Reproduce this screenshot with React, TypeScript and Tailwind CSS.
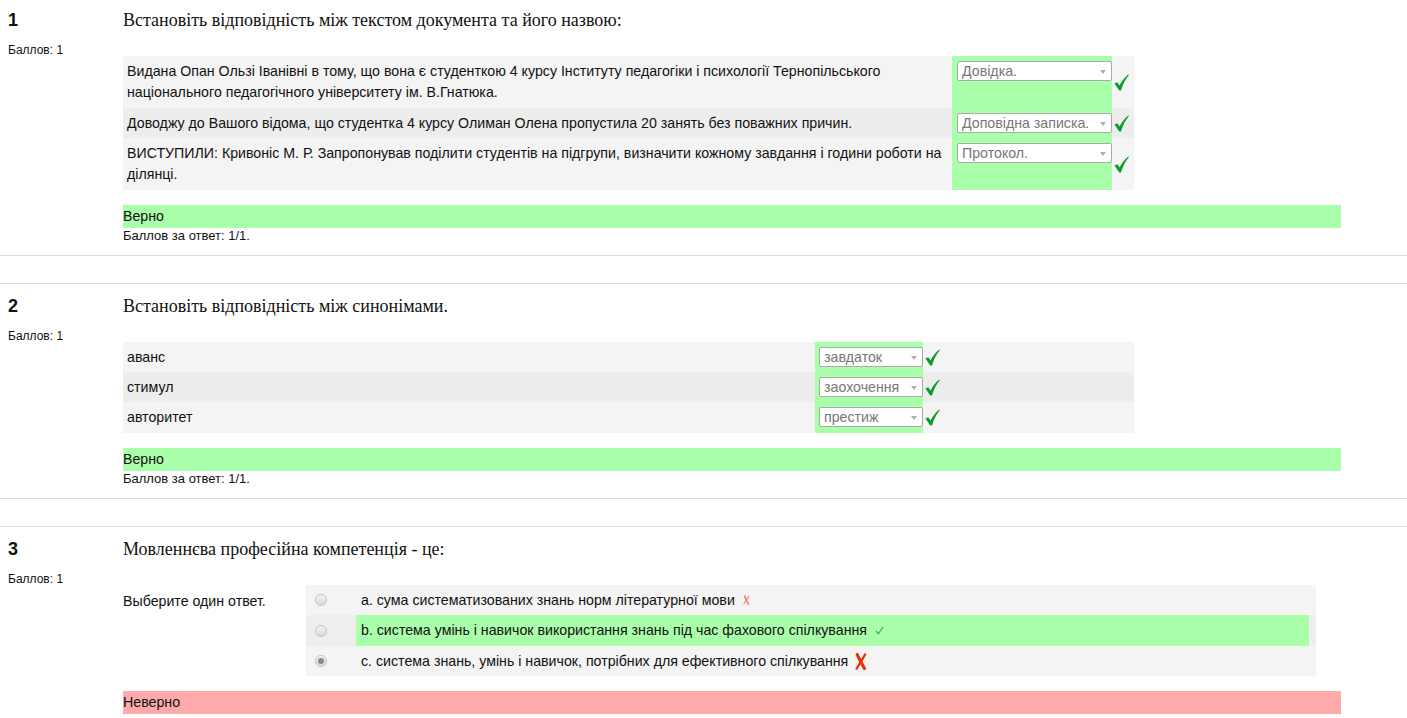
import React from "react";

const SANS = "font-['Liberation_Sans',Arial,sans-serif]";
const SERIF = "font-['Liberation_Serif','Times_New_Roman',serif]";

function BigCheck() {
  return (
    <svg width="15" height="17" viewBox="0 0 15 17" className="block">
      <path
        d="M0.5 9.6 L3.2 8.2 L5.6 11.6 C7.6 7.2 10.3 3.6 14.2 0.4 L14.8 1.3 C11.6 4.8 9 9.8 7 16.6 L5.2 16.6 Z"
        fill="#0c9c2a"
      />
    </svg>
  );
}

function SmallCheck() {
  return (
    <svg width="9" height="9" viewBox="0 0 9 9" className="inline-block">
      <path d="M1 5 L3.4 7.8 L8 1" stroke="#3fae55" strokeWidth="1.3" fill="none" />
    </svg>
  );
}

function SmallX() {
  return (
    <svg width="7" height="10" viewBox="0 0 7 10" className="inline-block">
      <path d="M1.6 1 C2.6 3.5 4 6.5 5.4 9.2" stroke="#f47e60" strokeWidth="1.6" fill="none" strokeLinecap="round" />
      <path d="M5.8 1.4 C4.4 3.6 2.8 6.2 1 8.8" stroke="#f47e60" strokeWidth="1.1" fill="none" strokeLinecap="round" />
    </svg>
  );
}

function BigX() {
  return (
    <svg width="12" height="17" viewBox="0 0 12 17" className="inline-block">
      <path d="M2.2 1.6 C4.2 5.8 6.6 10.6 9.4 15.4" stroke="#e8300c" strokeWidth="3.2" fill="none" strokeLinecap="round" />
      <path d="M10.2 1.4 C7.8 5.6 5 10.4 1.6 15.6" stroke="#e8300c" strokeWidth="2.2" fill="none" strokeLinecap="round" />
    </svg>
  );
}

function Select({ text, w }: { text: string; w: string }) {
  return (
    <div
      className={`relative h-[20px] bg-white border border-[#aaaaaa] rounded-[2px] text-[14.2px] leading-[19px] text-[#777777] pl-[4px] overflow-hidden whitespace-nowrap ${w}`}
    >
      {text}
      <span className="absolute right-[5px] top-[8px] w-0 h-0 border-l-[3px] border-r-[3px] border-t-[4px] border-l-transparent border-r-transparent border-t-[#b0b0b0]" />
    </div>
  );
}

type MRow = { text: React.ReactNode; sel: string; h: string; bg: string };

function MatchTable({
  rows,
  textW,
  selW,
  selCellW,
  selPad,
  checkW,
}: {
  rows: MRow[];
  textW: string;
  selW: string;
  selCellW: string;
  selPad: string;
  checkW: string;
}) {
  return (
    <div className="w-[1011px]">
      {rows.map((r, i) => (
        <div key={i} className={`flex ${r.h} ${r.bg}`}>
          <div className={`${textW} shrink-0 flex items-center px-[4px] text-[14.2px] leading-[21px]`}>
            <div>{r.text}</div>
          </div>
          <div className={`${selCellW} shrink-0 bg-[#aaffaa] pt-[5px] ${selPad}`}>
            <Select text={r.sel} w={selW} />
          </div>
          <div className={`${checkW} flex items-center pl-[2px]`}>
            <BigCheck />
          </div>
        </div>
      ))}
    </div>
  );
}

function Radio({ checked }: { checked?: boolean }) {
  return (
    <span className="w-[12px] h-[12px] rounded-full border border-[#c4c4c4] bg-linear-to-b from-[#f4f4f4] to-[#dadada] flex items-center justify-center">
      {checked && <span className="w-[6px] h-[6px] rounded-full bg-[#8a8a8a]" />}
    </span>
  );
}

function Question({
  num,
  title,
  body,
  correct,
  score,
  first,
}: {
  num: string;
  title: string;
  body: React.ReactNode;
  correct: boolean;
  score?: string;
  first?: boolean;
}) {
  return (
    <div className={`border-y border-[#dddddd] flex pt-[10px] pb-[11px] ${first ? "" : "mt-[27px]"}`}>
      <div className="w-[123px] shrink-0 pl-[8px]">
        <div className="text-[18px] leading-[24px] font-bold">{num}</div>
        <div className="mt-[10px] text-[12px] leading-[16px]">Баллов: 1</div>
      </div>
      <div className="w-[1218px] shrink-0">
        <div className={`${SERIF} text-[18px] leading-[24px]`}>{title}</div>
        <div className="mt-[24px]">{body}</div>
        <div
          className={`mt-[15px] h-[23px] leading-[23px] text-[14.2px] ${correct ? "bg-[#aaffaa]" : "bg-[#ffaaaa]"}`}
        >
          {correct ? "Верно" : "Неверно"}
        </div>
        {score && <div className="text-[13px] leading-[16px]">{score}</div>}
      </div>
    </div>
  );
}

export default function App() {
  const q1: MRow[] = [
    {
      text:
        "Видана Опан Ользі Іванівні в тому, що вона є студенткою 4 курсу Інституту педагогіки і психології Тернопільського національного педагогічного університету ім. В.Гнатюка.",
      sel: "Довідка.",
      h: "h-[52px]",
      bg: "bg-[#f4f4f4]",
    },
    {
      text: "Доводжу до Вашого відома, що студентка 4 курсу Олиман Олена пропустила 20 занять без поважних причин.",
      sel: "Доповідна записка.",
      h: "h-[30px]",
      bg: "bg-[#ededed]",
    },
    {
      text:
        "ВИСТУПИЛИ: Кривоніс М. Р. Запропонував поділити студентів на підгрупи, визначити кожному завдання і години роботи на ділянці.",
      sel: "Протокол.",
      h: "h-[52px]",
      bg: "bg-[#f4f4f4]",
    },
  ];
  const q2: MRow[] = [
    { text: "аванс", sel: "завдаток", h: "h-[30px]", bg: "bg-[#f4f4f4]" },
    { text: "стимул", sel: "заохочення", h: "h-[30px]", bg: "bg-[#ededed]" },
    { text: "авторитет", sel: "престиж", h: "h-[31px]", bg: "bg-[#f4f4f4]" },
  ];

  const q3Body = (
    <div className="flex">
      <div className="w-[183px] shrink-0 pt-[6px] text-[14.2px] leading-[21px]">Выберите один ответ.</div>
      <div className="w-[1010px] text-[14.2px] leading-[21px]">
        <div className="flex h-[30px] bg-[#f4f4f4] pr-[7px]">
          <div className="w-[50px] flex items-center pl-[9px]">
            <Radio />
          </div>
          <div className="flex-1 flex items-center pl-[5px]">
            a. сума систематизованих знань норм літературної мови
            <span className="ml-[8px] flex items-center">
              <SmallX />
            </span>
          </div>
        </div>
        <div className="flex h-[31px] bg-[#eeeeee] pr-[7px]">
          <div className="w-[50px] flex items-center pl-[9px]">
            <Radio />
          </div>
          <div className="flex-1 flex items-center pl-[5px] bg-[#aaffaa]">
            b. система умінь і навичок використання знань під час фахового спілкування
            <span className="ml-[8px] flex items-center">
              <SmallCheck />
            </span>
          </div>
        </div>
        <div className="flex h-[30px] bg-[#f4f4f4] pr-[7px]">
          <div className="w-[50px] flex items-center pl-[9px]">
            <Radio checked />
          </div>
          <div className="flex-1 flex items-center pl-[5px]">
            c. система знань, умінь і навичок, потрібних для ефективного спілкування
            <span className="ml-[7px] flex items-center">
              <BigX />
            </span>
          </div>
        </div>
      </div>
    </div>
  );

  return (
    <div className={`${SANS} text-[#111111] bg-white min-h-screen overflow-hidden`}>
      <div className="mt-[-3px]">
        <Question
          first
          num="1"
          title="Встановіть відповідність між текстом документа та його назвою:"
          correct
          score="Баллов за ответ: 1/1."
          body={
            <MatchTable
              rows={q1}
              textW="w-[829px]"
              selCellW="w-[160px]"
              selPad="pl-[5px]"
              selW="w-[155px]"
              checkW="w-[22px]"
            />
          }
        />
        <Question
          num="2"
          title="Встановіть відповідність між синонімами."
          correct
          score="Баллов за ответ: 1/1."
          body={
            <MatchTable
              rows={q2}
              textW="w-[692px]"
              selCellW="w-[108px]"
              selPad="pl-[4px]"
              selW="w-[104px]"
              checkW="w-[211px]"
            />
          }
        />
        <Question
          num="3"
          title="Мовленнєва професійна компетенція - це:"
          correct={false}
          body={q3Body}
        />
      </div>
    </div>
  );
}
